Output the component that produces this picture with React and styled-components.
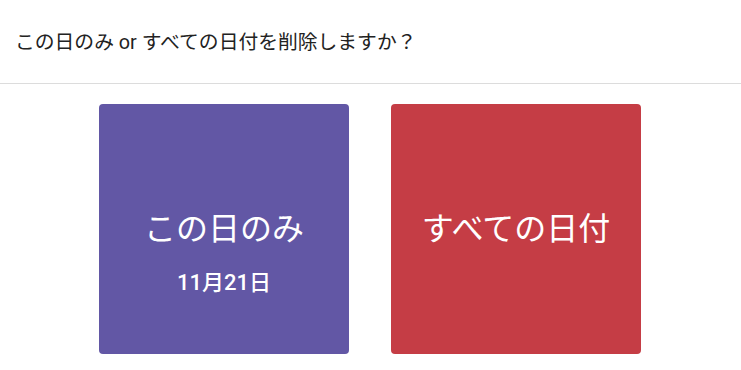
import React from "react";
import styled, { createGlobalStyle } from "styled-components";

const GlobalStyle = createGlobalStyle`
  html, body {
    margin: 0;
    padding: 0;
    background: #fff;
  }
  body {
    font-family: Roboto, "Noto Sans CJK JP", sans-serif;
  }
`;

const Page = styled.div`
  width: 741px;
  height: 370px;
  overflow: hidden;
  background: #fff;
`;

const Header = styled.div`
  height: 83px;
  display: flex;
  align-items: center;
  padding: 0 15px;
  border-bottom: 1px solid #dcdcdc;
`;

const Title = styled.h1`
  margin: 0;
  margin-top: -3px;
  font-size: 19.8px;
  font-weight: 400;
  color: #222;
`;

const Choices = styled.div`
  display: flex;
  justify-content: center;
  gap: 42px;
  padding: 20px 1px 0 0;
`;

const Choice = styled.button`
  width: 250px;
  height: 250px;
  border: none;
  border-radius: 4px;
  background: ${props => props.color};
  color: #fff;
  display: grid;
  grid-template-rows: 1fr auto 1fr;
  justify-items: center;
  font-family: inherit;
  cursor: pointer;
  padding: 0;
`;

const Label = styled.span`
  grid-row: 2;
  font-size: 32px;
  font-weight: 400;
  line-height: 40px;
`;

const SubLabel = styled.span`
  grid-row: 3;
  align-self: start;
  font-size: 22px;
  font-weight: 500;
  line-height: 28px;
  margin-top: 20px;
`;

const App = () => {
  return (
    <Page>
      <GlobalStyle />
      <Header>
        <Title>この日のみ or すべての日付を削除しますか？</Title>
      </Header>
      <Choices>
        <Choice color="#6257a5">
          <Label>この日のみ</Label>
          <SubLabel>11月21日</SubLabel>
        </Choice>
        <Choice color="#c53d45">
          <Label>すべての日付</Label>
        </Choice>
      </Choices>
    </Page>
  );
};

export default App;
